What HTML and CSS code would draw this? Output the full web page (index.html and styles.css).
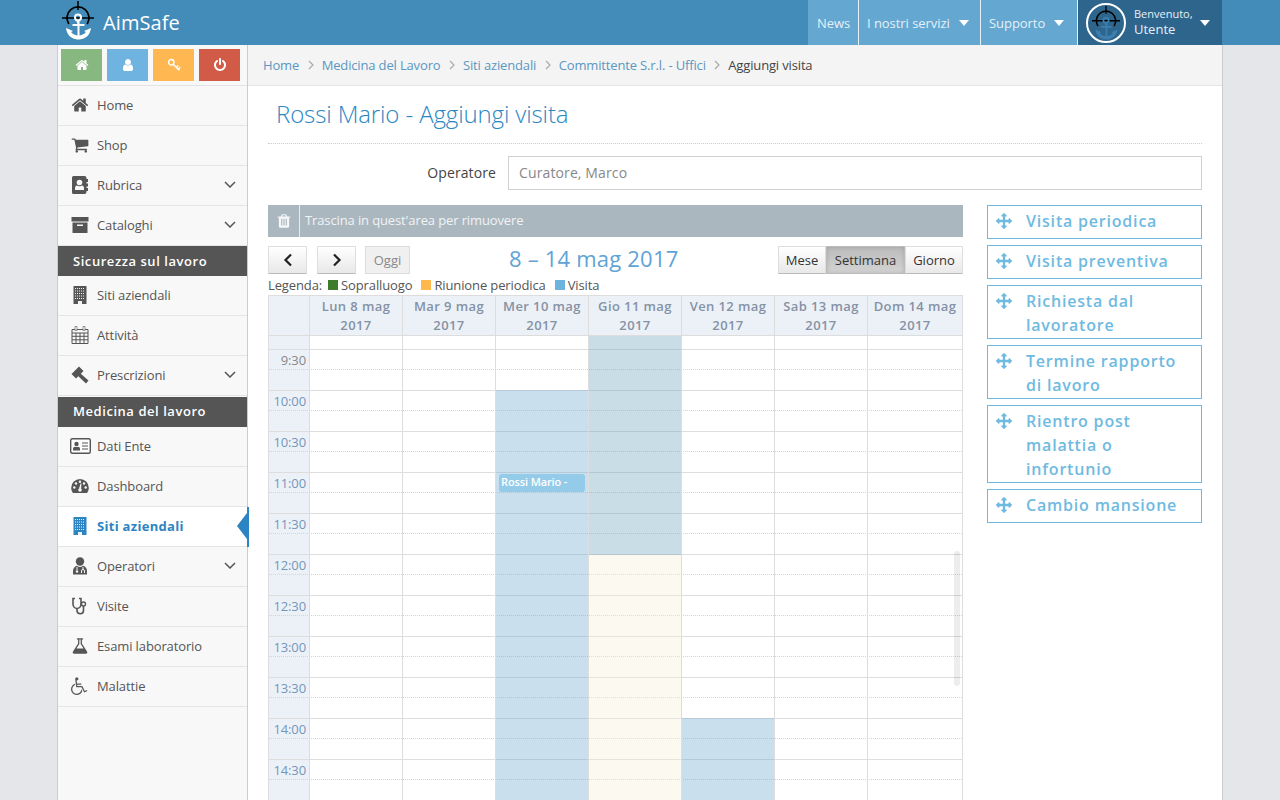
FILE: index.html
```html
<!DOCTYPE html>
<html>
    <head>
        <meta charset="utf-8" />
        <title>AimSafe - Aggiungi visita</title>
        <link rel="stylesheet" href="styles.css">
    </head>

    <body>
        <!-- icone -->
        <svg class="sprite" xmlns="http://www.w3.org/2000/svg">
            <symbol id="i-logo" viewBox="0 0 34 40">
                <path d="M7.800 24A11 11 0 1 1 26.200 24" fill="none" stroke="#000" stroke-width="1.800"/>
                <path d="M1 18H33M17 1V10" fill="none" stroke="#000" stroke-width="1.500"/>
                <circle cx="17" cy="17.500" r="3" fill="none" stroke="currentColor" stroke-width="2"/>
                <path d="M15.500 21h3v3h5v2h-5v9.500c3-.5 5-1.500 6.500-3.500l-2-1 7-3c-1 8-6 10.500-11 11.500h-3c-5-1-10-3.500-11-11.500l7 3-2 1c1.500 2 3.500 3 6.500 3.500V26h-5v-2h5z" fill="currentColor"/>
            </symbol>
            <symbol id="i-home" viewBox="0 0 1792 1792"><path d="M1472 992v480q0 26-19 45t-45 19h-384v-384h-256v384h-384q-26 0-45-19t-19-45v-480q0-1 .5-3t.5-3l575-474 575 474q1 2 1 6zm223-69l-62 74q-8 9-21 11h-3q-13 0-21-7l-692-577-692 577q-12 8-24 7-13-2-21-11l-62-74q-8-10-7-23.500t11-21.500l719-599q32-26 76-26t76 26l244 204v-195q0-14 9-23t23-9h192q14 0 23 9t9 23v408l219 182q10 8 11 21.500t-7 23.500z"/></symbol>
            <symbol id="i-user" viewBox="0 0 1792 1792"><path d="M1536 1399q0 109-62.500 187t-150.500 78h-854q-88 0-150.500-78t-62.500-187q0-85 8.500-160.500t31.500-152 58.500-131 94-89 134.500-34.500q131 128 313 128t313-128q76 0 134.500 34.500t94 89 58.500 131 31.500 152 8.500 160.500zm-256-887q0 159-112.500 271.500t-271.500 112.500-271.500-112.500-112.500-271.500 112.500-271.500 271.500-112.500 271.500 112.500 112.500 271.500z"/></symbol>
            <symbol id="i-key" viewBox="0 0 18 18">
                <circle cx="5.500" cy="5.500" r="3.500" fill="none" stroke="currentColor" stroke-width="1.800"/>
                <path d="M8 8L16 16M12 12L14.500 9.500M14.500 14.500L17 12" fill="none" stroke="currentColor" stroke-width="1.800"/>
            </symbol>
            <symbol id="i-power" viewBox="0 0 1792 1792"><path d="M1664 896q0 156-61 298t-164 245-245 164-298 61-298-61-245-164-164-245-61-298q0-182 80.500-343t226.500-270q43-32 95.500-25t83.500 50q32 42 24.500 94.500t-49.500 84.500q-98 74-151.500 181t-53.500 228q0 104 40.500 198.500t109.500 163.500 163.500 109.500 198.500 40.500 198.500-40.500 163.500-109.500 109.500-163.500 40.500-198.500q0-121-53.500-228t-151.500-181q-42-32-49.500-84.500t24.500-94.500q31-43 84-50t95 25q146 109 226.500 270t80.500 343zm-640-768v640q0 52-38 90t-90 38-90-38-38-90v-640q0-52 38-90t90-38 90 38 38 90z"/></symbol>
            <symbol id="i-cart" viewBox="0 0 1792 1792"><path d="M704 1536q0 52-38 90t-90 38-90-38-38-90 38-90 90-38 90 38 38 90zm896 0q0 52-38 90t-90 38-90-38-38-90 38-90 90-38 90 38 38 90zm128-1088v512q0 24-16.500 42.500t-40.500 21.500l-1044 122q13 60 13 70 0 16-24 64h920q26 0 45 19t19 45-19 45-45 19h-1024q-26 0-45-19t-19-45q0-11 8-31.500t16-36 21.500-40 15.500-29.500l-177-823h-204q-26 0-45-19t-19-45 19-45 45-19h256q16 0 28.500 6.500t19.500 15.500 13 24.500 8 26 5.500 29.500 4.500 26h1201q26 0 45 19t19 45z"/></symbol>
            <symbol id="i-book" viewBox="0 0 18 18">
                <path d="M2.500 0h11a2 2 0 0 1 2 2v1h1.500v3h-1.500v1.500h1.500v3h-1.500V12h1.500v3h-1.500v1a2 2 0 0 1-2 2h-11a1.500 1.500 0 0 1-1.500-1.500v-15A1.500 1.500 0 0 1 2.500 0z"/>
                <circle cx="8.500" cy="6.500" r="2.800" fill="#f8f8f8"/>
                <path d="M4 14v-2c0-1.500 1-2.500 2-2.500 .7 .5 1.500 .8 2.500 .8s1.800-.3 2.500-.8c1 0 2 1 2 2.500v2z" fill="#f8f8f8"/>
            </symbol>
            <symbol id="i-archive" viewBox="0 0 18 18">
                <path d="M.5 1h17v4.500H.5zM1.500 6.500h15V17h-15z"/>
                <path d="M6 8.500h6V10H6z" fill="#f8f8f8"/>
            </symbol>
            <symbol id="i-building" viewBox="0 0 18 18">
                <path d="M2.500 0h13v18h-13z"/>
                <path d="M4 2.500H14M4 5H14M4 7.500H14M4 10H14M4 12.500H14" fill="none" stroke="#f2f2f2" stroke-width="1.100" stroke-dasharray="1 1"/>
                <path d="M7 15h4v3H7z" fill="#f2f2f2"/>
            </symbol>
            <symbol id="i-calendar" viewBox="0 0 18 18">
                <path d="M1 3.500h16v14H1zM1 7h16M1 10.300h16M1 13.800h16M5 7v10.500M9 7v10.500M13 7v10.500" fill="none" stroke="currentColor"/>
                <path d="M4 .5h2v4H4zM12 .5h2v4h-2z" stroke="currentColor" stroke-width=".6" fill="#f8f8f8"/>
            </symbol>
            <symbol id="i-gavel" viewBox="0 0 18 18">
                <path d="M8 .5L12.500 5 5 12.500 .5 8zM9.500 7.500L17.500 14.500 15 17.500 7 10z"/>
            </symbol>
            <symbol id="i-id" viewBox="0 0 21 16">
                <rect x=".7" y=".7" width="19.600" height="14.600" rx="1.500" fill="#fdfdfd" stroke="currentColor" stroke-width="1.400"/>
                <circle cx="6.500" cy="6" r="2.200"/>
                <path d="M3 12.500v-1.500c0-1.500 1-2.300 2-2.300 .5 .3 1 .4 1.500 .4s1-.1 1.500-.4c1 0 2 .8 2 2.300v1.500z"/>
                <path d="M12 5h6M12 8h6M12 11h6" fill="none" stroke="currentColor" stroke-width="1.200"/>
            </symbol>
            <symbol id="i-gauge" viewBox="0 0 18 18">
                <path d="M9 2A8.800 8.800 0 0 0 .2 10.800c0 2 .6 3.800 1.800 5.200h14c1.200-1.400 1.800-3.200 1.800-5.200A8.800 8.800 0 0 0 9 2z"/>
                <g fill="#f8f8f8">
                    <circle cx="3.300" cy="10.500" r="1.200"/><circle cx="5" cy="6.500" r="1.200"/><circle cx="9" cy="4.800" r="1.200"/><circle cx="13" cy="6.500" r="1.200"/><circle cx="14.700" cy="10.500" r="1.200"/>
                    <path d="M8 11.500L9.600 6.500 10.500 6.800 10 12z"/><circle cx="9" cy="13" r="1.800"/>
                </g>
            </symbol>
            <symbol id="i-doctor" viewBox="0 0 18 18">
                <circle cx="9" cy="4.500" r="4.200"/>
                <path d="M2 17.500v-3.500c0-3 2-5 4-5.300 .9 .8 1.900 1.300 3 1.300s2.100-.5 3-1.300c2 .3 4 2.300 4 5.300v3.500z"/>
                <path d="M6 10v3M12 10v2.500M10.500 16v-2a1.500 1.500 0 0 1 3 0v2" fill="none" stroke="#f8f8f8"/>
                <circle cx="6" cy="14.500" r="1.200" fill="#f8f8f8"/>
            </symbol>
            <symbol id="i-stetho" viewBox="0 0 18 18">
                <path d="M4 1.500H2V7c0 2.800 2 4.500 4 4.500S10 9.800 10 7V1.500H8" fill="none" stroke="currentColor" stroke-width="1.600"/>
                <path d="M6 11.500v2c0 2 1.500 3.200 3.200 3.200s3.300-1.200 3.300-3.200V9" fill="none" stroke="currentColor" stroke-width="1.600"/>
                <circle cx="12.500" cy="7" r="2" fill="none" stroke="currentColor" stroke-width="1.400"/>
            </symbol>
            <symbol id="i-flask" viewBox="0 0 1792 1792"><path d="M1591 1448q56 89 21.500 152.500t-140.500 63.500h-1152q-106 0-140.500-63.500t21.500-152.500l503-793v-399h-64q-26 0-45-19t-19-45 19-45 45-19h512q26 0 45 19t19 45-19 45-45 19h-64v399zm-779-725l-272 429h712l-272-429-20-31v-436h-128v436z"/></symbol>
            <symbol id="i-wheel" viewBox="0 0 1792 1792"><path d="M1023 1187l102 204q-58 179-210 290t-339 111q-156 0-288.500-77.500t-210-210-77.500-288.500q0-181 104.500-330t274.500-211l17 131q-122 54-195 165.500t-73 244.500q0 185 131.500 316.500t316.500 131.500q126 0 232.500-65t165-175.500 49.500-236.500zm548 100l58 114-256 128q-13 7-29 7-40 0-57-35l-239-477h-472q-24 0-42.500-16.500t-21.500-40.500l-96-779q-2-17 6-42 14-51 57-82.500t97-31.500q66 0 113 47t47 113q0 69-52 117.500t-120 41.500l37 289h423v128h-407l16 128h455q40 0 57 35l228 455z"/></symbol>
            <symbol id="i-trash" viewBox="0 0 1792 1792"><path d="M704 1376v-704q0-14-9-23t-23-9h-64q-14 0-23 9t-9 23v704q0 14 9 23t23 9h64q14 0 23-9t9-23zm256 0v-704q0-14-9-23t-23-9h-64q-14 0-23 9t-9 23v704q0 14 9 23t23 9h64q14 0 23-9t9-23zm256 0v-704q0-14-9-23t-23-9h-64q-14 0-23 9t-9 23v704q0 14 9 23t23 9h64q14 0 23-9t9-23zm-544-992h448l-48-117q-7-9-17-11h-317q-10 2-17 11zm928 32v64q0 14-9 23t-23 9h-96v948q0 83-47 143.500t-113 60.500h-832q-66 0-113-58.500t-47-141.500v-952h-96q-14 0-23-9t-9-23v-64q0-14 9-23t23-9h309l70-167q15-37 54-63t79-26h320q40 0 79 26t54 63l70 167h309q14 0 23 9t9 23z"/></symbol>
            <symbol id="i-move" viewBox="0 0 1792 1792"><path d="M1792 896q0 26-19 45l-256 256q-19 19-45 19t-45-19-19-45v-128h-384v384h128q26 0 45 19t19 45-19 45l-256 256q-19 19-45 19t-45-19l-256-256q-19-19-19-45t19-45 45-19h128v-384h-384v128q0 26-19 45t-45 19-45-19l-256-256q-19-19-19-45t19-45l256-256q19-19 45-19t45 19 19 45v128h384v-384h-128q-26 0-45-19t-19-45 19-45l256-256q19-19 45-19t45 19l256 256q19 19 19 45t-19 45-45 19h-128v384h384v-128q0-26 19-45t45-19 45 19l256 256q19 19 19 45z"/></symbol>
            <symbol id="i-down" viewBox="0 0 12 7"><path d="M1 1l5 5 5-5" fill="none" stroke="currentColor" stroke-width="1.500"/></symbol>
            <symbol id="i-sep" viewBox="0 0 6 10"><path d="M1 1l4 4-4 4" fill="none" stroke="currentColor" stroke-width="1.200"/></symbol>
            <symbol id="i-prev" viewBox="0 0 10 14"><path d="M8 1.500L2.500 7 8 12.500" fill="none" stroke="currentColor" stroke-width="2.200"/></symbol>
            <symbol id="i-next" viewBox="0 0 10 14"><path d="M2 1.500L7.500 7 2 12.500" fill="none" stroke="currentColor" stroke-width="2.200"/></symbol>
        </svg>

        <div class="topbar">
            <div class="wrap topbar-in">
                <a class="logo">
                    <svg class="logo-img"><use href="#i-logo"/></svg>
                    <span>AimSafe</span>
                </a>
                <div class="nav">
                    <a class="nav-item news">News</a>
                    <a class="nav-item serv">I nostri servizi<i class="caret"></i></a>
                    <a class="nav-item supp">Supporto<i class="caret"></i></a>
                    <a class="nav-user">
                        <span class="avatar"><svg><use href="#i-logo"/></svg></span>
                        <span class="hello"><small>Benvenuto,</small><b>Utente</b></span>
                        <i class="caret"></i>
                    </a>
                </div>
            </div>
        </div>

        <div class="wrap page">
            <div class="side">
                <div class="side-btns">
                    <a class="green"><svg><use href="#i-home"/></svg></a>
                    <a class="blue"><svg><use href="#i-user"/></svg></a>
                    <a class="orange"><svg><use href="#i-key"/></svg></a>
                    <a class="red"><svg><use href="#i-power"/></svg></a>
                </div>
                <a class="side-item"><svg class="ic"><use href="#i-home"/></svg>Home</a>
                <a class="side-item"><svg class="ic"><use href="#i-cart"/></svg>Shop</a>
                <a class="side-item"><svg class="ic"><use href="#i-book"/></svg>Rubrica<svg class="down"><use href="#i-down"/></svg></a>
                <a class="side-item"><svg class="ic"><use href="#i-archive"/></svg>Cataloghi<svg class="down"><use href="#i-down"/></svg></a>
                <div class="side-head">Sicurezza sul lavoro</div>
                <a class="side-item"><svg class="ic"><use href="#i-building"/></svg>Siti aziendali</a>
                <a class="side-item"><svg class="ic"><use href="#i-calendar"/></svg>Attività</a>
                <a class="side-item"><svg class="ic"><use href="#i-gavel"/></svg>Prescrizioni<svg class="down"><use href="#i-down"/></svg></a>
                <div class="side-head next">Medicina del lavoro</div>
                <a class="side-item"><svg class="ic wide"><use href="#i-id"/></svg>Dati Ente</a>
                <a class="side-item"><svg class="ic"><use href="#i-gauge"/></svg>Dashboard</a>
                <a class="side-item curr"><svg class="ic"><use href="#i-building"/></svg>Siti aziendali</a>
                <a class="side-item"><svg class="ic"><use href="#i-doctor"/></svg>Operatori<svg class="down"><use href="#i-down"/></svg></a>
                <a class="side-item"><svg class="ic"><use href="#i-stetho"/></svg>Visite</a>
                <a class="side-item"><svg class="ic"><use href="#i-flask"/></svg>Esami laboratorio</a>
                <a class="side-item"><svg class="ic"><use href="#i-wheel"/></svg>Malattie</a>
            </div>

            <div class="main">
                <div class="crumbs">
                    <a>Home</a><svg class="sep"><use href="#i-sep"/></svg>
                    <a>Medicina del Lavoro</a><svg class="sep"><use href="#i-sep"/></svg>
                    <a>Siti aziendali</a><svg class="sep"><use href="#i-sep"/></svg>
                    <a>Committente S.r.l. - Uffici</a><svg class="sep"><use href="#i-sep"/></svg>
                    <span>Aggiungi visita</span>
                </div>

                <div class="content">
                    <h1 class="title">Rossi Mario - Aggiungi visita</h1>

                    <div class="form-row">
                        <label>Operatore</label>
                        <div class="input">Curatore, Marco</div>
                    </div>

                    <div class="cols">
                        <div class="left">
                            <div class="trash">
                                <span class="trash-ic"><svg><use href="#i-trash"/></svg></span>
                                <span class="trash-txt">Trascina in quest'area per rimuovere</span>
                            </div>

                            <div class="toolbar">
                                <a class="btn arrow"><svg><use href="#i-prev"/></svg></a>
                                <a class="btn arrow second"><svg><use href="#i-next"/></svg></a>
                                <a class="btn off">Oggi</a>
                                <div class="range">8 – 14 mag 2017</div>
                                <div class="views">
                                    <a class="btn mese">Mese</a>
                                    <a class="btn sett">Settimana</a>
                                    <a class="btn gior">Giorno</a>
                                </div>
                            </div>

                            <div class="legend">
                                <span>Legenda:</span>
                                <i class="sq sq-green"></i><span>Sopralluogo</span>
                                <i class="sq sq-orange"></i><span>Riunione periodica</span>
                                <i class="sq sq-blue"></i><span>Visita</span>
                            </div>

                            <div class="cal">
                                <div class="cal-head">
                                    <div></div>
                                    <div>Lun 8 mag<br>2017</div>
                                    <div>Mar 9 mag<br>2017</div>
                                    <div>Mer 10 mag<br>2017</div>
                                    <div>Gio 11 mag<br>2017</div>
                                    <div>Ven 12 mag<br>2017</div>
                                    <div>Sab 13 mag<br>2017</div>
                                    <div>Dom 14 mag<br>2017</div>
                                </div>
                                <div class="cal-body">
                                    <div class="row short"><div class="time"></div></div>
                                    <div class="row"><div class="time grey">9:30</div></div>
                                    <div class="row"><div class="time">10:00</div></div>
                                    <div class="row"><div class="time">10:30</div></div>
                                    <div class="row"><div class="time">11:00</div></div>
                                    <div class="row"><div class="time">11:30</div></div>
                                    <div class="row"><div class="time">12:00</div></div>
                                    <div class="row"><div class="time">12:30</div></div>
                                    <div class="row"><div class="time">13:00</div></div>
                                    <div class="row"><div class="time">13:30</div></div>
                                    <div class="row"><div class="time">14:00</div></div>
                                    <div class="row"><div class="time">14:30</div></div>

                                    <!-- colonne dei giorni sopra le righe -->
                                    <div class="days">
                                        <div></div>
                                        <div class="day"></div>
                                        <div class="day"></div>
                                        <div class="day">
                                            <div class="fill-wed"></div>
                                            <a class="event">Rossi Mario -</a>
                                        </div>
                                        <div class="day">
                                            <div class="fill-off"></div>
                                            <div class="fill-cream"></div>
                                        </div>
                                        <div class="day"><div class="fill-fri"></div></div>
                                        <div class="day"></div>
                                        <div class="day"></div>
                                    </div>
                                    <div class="scroll"></div>
                                </div>
                            </div>
                        </div>

                        <div class="right">
                            <a class="drag"><svg><use href="#i-move"/></svg><span>Visita periodica</span></a>
                            <a class="drag"><svg><use href="#i-move"/></svg><span>Visita preventiva</span></a>
                            <a class="drag"><svg><use href="#i-move"/></svg><span>Richiesta dal lavoratore</span></a>
                            <a class="drag"><svg><use href="#i-move"/></svg><span>Termine rapporto di lavoro</span></a>
                            <a class="drag"><svg><use href="#i-move"/></svg><span>Rientro post malattia o infortunio</span></a>
                            <a class="drag"><svg><use href="#i-move"/></svg><span>Cambio mansione</span></a>
                        </div>
                    </div>
                </div>
            </div>
        </div>
    </body>
</html>
```

FILE: styles.css
```css
*{margin:0;padding:0;box-sizing:border-box;}
html,body{height:100%;overflow:hidden;}
body{background:#e4e6ea;font:13px/18px "Open Sans",sans-serif;color:#555;letter-spacing:-.12px;}
a{color:inherit;text-decoration:none;}
.sprite{display:none;}
.wrap{width:1166px;margin:0 auto;}

/* barra in alto */
.topbar{height:45px;background:#438cb9;}
.topbar-in{display:flex;justify-content:space-between;padding:0 1px 0 4px;}
.logo{display:flex;align-items:center;height:45px;color:#fff;font-size:20px;letter-spacing:.1px;}
.logo-img{width:34px;height:40px;margin-right:8px;color:#fff;align-self:flex-start;}
.nav{display:flex;height:45px;color:#e4f0f7;letter-spacing:-.05px;}
.nav-item{display:flex;align-items:center;height:45px;background:#64a7d1;border-right:1px solid #e6f0f6;padding-left:8px;}
.news{width:51px;padding-left:9px;}
.serv{width:122px;}
.supp{width:97px;}
.caret{width:0;height:0;margin-left:9px;border:5px solid transparent;border-top:6px solid #fff;border-bottom:0;}
.nav-user{display:flex;align-items:center;width:144px;height:45px;background:#2e658c;padding-left:8px;}
.avatar{width:40px;height:40px;border:2px solid #fff;border-radius:50%;display:flex;justify-content:center;background:#2e658c;}
.avatar svg{width:30px;height:35px;color:#3c7fae;}
.hello{display:flex;flex-direction:column;margin:-2px 0 0 8px;width:66px;letter-spacing:0;}
.hello small{font-size:11px;line-height:15px;}
.hello b{font-weight:400;font-size:13px;line-height:16px;}
.nav-user .caret{margin-left:0;}

.page{display:flex;height:755px;border-right:1px solid #ccc;background:#fff;overflow:hidden;}

/* menu laterale */
.side{width:191px;flex:none;background:#f8f8f8;border-left:1px solid #ccc;border-right:1px solid #ccc;}
.side-btns{display:flex;gap:5px;height:41px;padding:4px 3px;border-bottom:1px solid #e3e3e3;}
.side-btns a{width:41px;height:32px;display:flex;align-items:center;justify-content:center;color:#fff;}
.side-btns svg{width:14px;height:14px;fill:currentColor;}
.green{background:#87b87f;}
.blue{background:#6fb3e0;}
.orange{background:#ffb752;}
.red{background:#d15b47;}
.side-item{position:relative;display:flex;align-items:center;height:40px;padding:0 0 2px 13px;border-bottom:1px solid #e5e5e5;color:#555;}
.ic{width:18px;height:18px;margin-right:8px;fill:currentColor;flex:none;}
.ic.wide{width:21px;height:16px;margin:0 6px 0 -1px;}
.down{width:12px;height:7px;margin-left:auto;margin-right:11px;color:#555;}
.side-head{height:30px;padding-left:15px;background:#555;color:#fff;font-weight:600;line-height:30px;letter-spacing:.55px;}
.side-head.next{margin-top:1px;line-height:29px;}
.side-item.curr{background:#fff;color:#2d84c3;font-weight:700;letter-spacing:.3px;}
.side-item.curr::before{content:"";position:absolute;right:-2px;top:0;height:40px;width:2px;background:#2d84c3;}
.side-item.curr::after{content:"";position:absolute;right:0;top:6px;border:13px solid transparent;border-right:10px solid #2d84c3;border-left:0;}

/* contenuto */
.main{flex:1;min-width:0;}
.crumbs{display:flex;align-items:center;height:41px;padding-left:15px;background:#f4f4f4;border-bottom:1px solid #e5e5e5;color:#5a97c2;letter-spacing:-.15px;}
.crumbs span{color:#444;}
.sep{width:6px;height:10px;margin:0 8px 0 8.5px;color:#aaa;}
.content{padding:0 20px;}
.title{height:58px;padding-left:8px;font-size:24px;font-weight:300;line-height:56px;color:#2a87c4;border-bottom:1px dotted #ccc;}
.form-row{display:flex;align-items:center;margin-top:12px;}
.form-row label{width:228px;margin-right:12px;text-align:right;font-size:14px;color:#444;letter-spacing:.1px;}
.input{flex:1;height:34px;padding-left:10px;border:1px solid #d0d0d0;font-size:14px;line-height:32px;color:#888;letter-spacing:.12px;}
.cols{display:flex;gap:24px;margin-top:15px;}
.left{width:695px;flex:none;}
.right{width:215px;flex:none;display:flex;flex-direction:column;gap:6px;}

.trash{display:flex;height:32px;background:#abb7bf;color:#f0f3f5;}
.trash-ic{display:flex;align-items:center;justify-content:center;width:32px;border-right:1px solid #e8ecef;}
.trash-ic svg{width:16px;height:16px;fill:#f4f6f7;}
.trash-txt{padding-left:5px;line-height:31px;}

.toolbar{display:flex;height:28px;margin-top:9px;}
.btn{display:flex;align-items:center;justify-content:center;height:28px;background:linear-gradient(#fff,#e8e8e8);border:1px solid #ddd;border-bottom-color:#bbb;color:#333;letter-spacing:0;}
.arrow{width:39px;}
.arrow svg{width:10px;height:14px;color:#222;}
.arrow.second{margin-left:10px;}
.btn.off{width:45px;margin-left:9px;background:#f0f0f0;border-color:#ddd;color:#888;}
.range{margin-left:99px;font-size:22px;line-height:24px;color:#5fa3d6;letter-spacing:.2px;}
.views{display:flex;margin-left:auto;}
.mese{width:48px;}
.sett{width:79px;background:linear-gradient(#bbb,#d4d4d4);border-color:#bbb;box-shadow:inset 0 0 4px rgba(0,0,0,.15);}
.gior{width:58px;}

.legend{display:flex;align-items:center;height:21px;color:#555;}
.sq{width:10px;height:10px;margin:0 3px 0 9px;}
.legend span:first-child + .sq{margin-left:6px;}
.sq-green{background:#3d7d2a;}
.sq-orange{background:#ffb84d;}
.sq-blue{background:#6cb4dd;}

/* calendario */
.cal{border:1px solid #ddd;border-bottom:0;}
.cal-head,.days{display:grid;grid-template-columns:40px repeat(6,93px) 1fr;}
.cal-head{height:40px;background:#ecf1f7;border-bottom:1px solid #ddd;text-align:center;font-weight:600;line-height:19px;letter-spacing:.4px;color:#8592a5;}
.cal-head div+div{border-left:1px solid #ddd;padding-top:1px;}
.cal-body{position:relative;height:464px;overflow:hidden;}
.row{position:relative;height:41px;border-bottom:1px solid #ddd;}
.row.short{height:14px;}
.row::after{content:"";position:absolute;left:0;right:0;top:19px;border-top:1px dotted #d4d4d4;}
.row.short::after{display:none;}
.time{width:40px;height:100%;padding-right:3px;background:#ecf1f7;text-align:right;line-height:20px;color:#7397ba;}
.time.grey{color:#888;}
.days{position:absolute;left:0;right:0;top:0;bottom:0;}
.day{position:relative;border-left:1px solid #ddd;}
.fill-wed{height:100%;margin-top:54px;background:rgba(120,175,210,.4);}
.fill-fri{height:100%;margin-top:382px;background:rgba(120,175,210,.4);}
.fill-off{height:219px;background:rgba(120,170,192,.4);}
.fill-cream{height:100%;background:rgba(247,240,217,.4);}
.event{position:absolute;left:3px;top:138px;width:86px;height:18px;padding-left:2px;background:#93cbe9;border-radius:3px;font-size:11px;font-weight:600;line-height:16px;color:#fff;}
.scroll{position:absolute;right:2px;top:215px;width:6px;height:135px;background:rgba(0,0,0,.07);border-radius:3px;}

/* elementi trascinabili */
.drag{display:flex;align-items:flex-start;min-height:34px;padding:3px 10px 1px 8px;border:1px solid #6fb8de;font-size:16px;font-weight:600;line-height:24px;letter-spacing:.8px;color:#6fbae1;}
.drag svg{width:16px;height:16px;margin:4px 14px 0 0;flex:none;fill:currentColor;}
```
